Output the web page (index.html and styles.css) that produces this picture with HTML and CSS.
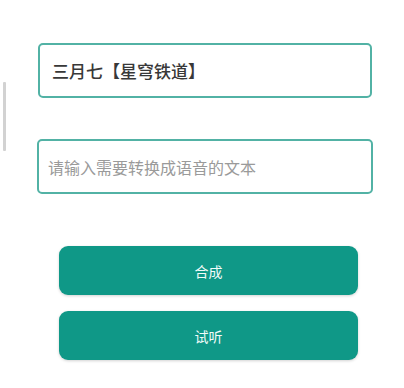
FILE: index.html
```html
<!DOCTYPE html>
<html lang="zh">
<head>
<meta charset="utf-8">
<link rel="stylesheet" href="styles.css">
</head>
<body>
<div class="page">
  <div class="scrollbar"></div>
  <div class="field field-name">
    <span class="value">三月七【星穹铁道】</span>
  </div>
  <div class="field field-text">
    <span class="placeholder">请输入需要转换成语音的文本</span>
  </div>
  <div class="actions">
    <button class="btn">合成</button>
    <button class="btn">试听</button>
  </div>
</div>
</body>
</html>
```
FILE: styles.css
```css
html, body {
  margin: 0;
  padding: 0;
  background: #ffffff;
}
body {
  font-family: "Noto Sans CJK SC", "Noto Sans", sans-serif;
  width: 404px;
  height: 388px;
  overflow: hidden;
}
.page {
  position: relative;
  display: flex;
  flex-direction: column;
  padding-top: 43px;
}
.scrollbar {
  position: absolute;
  left: 3px;
  top: 82px;
  width: 3px;
  height: 69px;
  background: #d2d2d2;
  border-radius: 1px;
}
.field {
  box-sizing: border-box;
  height: 55px;
  border: 2px solid #52b2a5;
  border-radius: 5px;
  display: flex;
  align-items: center;
}
.field-name {
  margin-left: 38px;
  width: 334px;
  padding-left: 12px;
}
.field-text {
  margin-top: 41px;
  margin-left: 37px;
  width: 336px;
  padding-left: 9px;
}
.value {
  font-size: 17px;
  font-weight: 500;
  color: #383838;
}
.placeholder {
  font-size: 16px;
  color: #9a9a9a;
}
.actions {
  display: flex;
  flex-direction: column;
  gap: 16px;
  margin-top: 52px;
  margin-left: 59px;
  width: 299px;
}
.btn {
  height: 49px;
  border: none;
  border-radius: 9px;
  background: #0f9887;
  color: #f2fbf9;
  font-family: "Noto Sans CJK SC", "Noto Sans", sans-serif;
  font-size: 14px;
  box-shadow: 0 1px 3px rgba(0, 0, 0, 0.18);
  padding: 0;
}
```
